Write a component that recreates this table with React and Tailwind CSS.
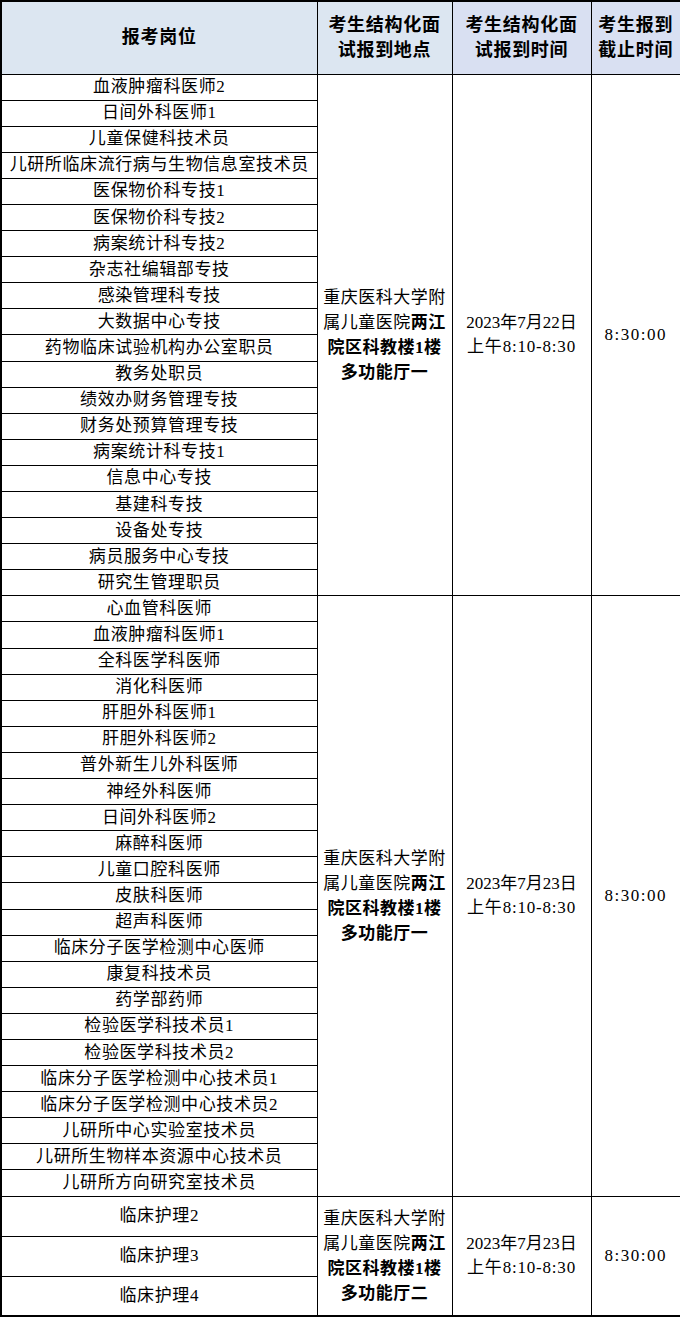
import React from "react";

const groups = [
  {
    rows: [
      "血液肿瘤科医师2",
      "日间外科医师1",
      "儿童保健科技术员",
      "儿研所临床流行病与生物信息室技术员",
      "医保物价科专技1",
      "医保物价科专技2",
      "病案统计科专技2",
      "杂志社编辑部专技",
      "感染管理科专技",
      "大数据中心专技",
      "药物临床试验机构办公室职员",
      "教务处职员",
      "绩效办财务管理专技",
      "财务处预算管理专技",
      "病案统计科专技1",
      "信息中心专技",
      "基建科专技",
      "设备处专技",
      "病员服务中心专技",
      "研究生管理职员",
    ],
    rowH: "h-[26.1px]",
    hall: "多功能厅一",
    date: "2023年7月22日",
  },
  {
    rows: [
      "心血管科医师",
      "血液肿瘤科医师1",
      "全科医学科医师",
      "消化科医师",
      "肝胆外科医师1",
      "肝胆外科医师2",
      "普外新生儿外科医师",
      "神经外科医师",
      "日间外科医师2",
      "麻醉科医师",
      "儿童口腔科医师",
      "皮肤科医师",
      "超声科医师",
      "临床分子医学检测中心医师",
      "康复科技术员",
      "药学部药师",
      "检验医学科技术员1",
      "检验医学科技术员2",
      "临床分子医学检测中心技术员1",
      "临床分子医学检测中心技术员2",
      "儿研所中心实验室技术员",
      "儿研所生物样本资源中心技术员",
      "儿研所方向研究室技术员",
    ],
    rowH: "h-[26.1px]",
    hall: "多功能厅一",
    date: "2023年7月23日",
  },
  {
    rows: ["临床护理2", "临床护理3", "临床护理4"],
    rowH: "h-[40px]",
    hall: "多功能厅二",
    date: "2023年7月23日",
  },
];

const cell = "border border-black text-center align-middle p-0";

function Place({ hall }) {
  return (
    <div className="leading-[25px] tracking-[0.5px]">
      <div>重庆医科大学附</div>
      <div>
        属儿童医院<b>两江</b>
      </div>
      <div className="font-bold">院区科教楼1楼</div>
      <div className="font-bold">{hall}</div>
    </div>
  );
}

export default function App() {
  return (
    <div
      className="w-[680px] bg-white text-black"
      style={{ fontFamily: '"Liberation Serif", "Noto Sans CJK SC", serif' }}
    >
      <table className="w-[680px] border-collapse table-fixed border-2 border-black text-[17px] leading-[20px]">
        <colgroup>
          <col className="w-[316px]" />
          <col className="w-[135px]" />
          <col className="w-[139px]" />
          <col className="w-[90px]" />
        </colgroup>
        <thead>
          <tr className="h-[73px] font-bold text-[18px] leading-[25px] tracking-[0.7px]">
            <th className={`${cell} bg-[#dce6f1]`}>报考岗位</th>
            <th className={`${cell} bg-[#dce6f1]`}>
              考生结构化面
              <br />
              试报到地点
            </th>
            <th className={`${cell} bg-[#d9e0f2]`}>
              考生结构化面
              <br />
              试报到时间
            </th>
            <th className={`${cell} bg-[#d9e0f2]`}>
              考生报到
              <br />
              截止时间
            </th>
          </tr>
        </thead>
        <tbody>
          {groups.map((g, gi) =>
            g.rows.map((name, i) => (
              <tr key={`${gi}-${i}`} className={g.rowH}>
                <td className={`${cell} tracking-[0.6px] whitespace-nowrap`}>{name}</td>
                {i === 0 && (
                  <>
                    <td rowSpan={g.rows.length} className={cell}>
                      <Place hall={g.hall} />
                    </td>
                    <td rowSpan={g.rows.length} className={`${cell} leading-[24px]`}>
                      <div>{g.date}</div>
                      <div className="tracking-[0.8px]">上午8:10-8:30</div>
                    </td>
                    <td rowSpan={g.rows.length} className={`${cell} tracking-[1.5px]`}>
                      8:30:00
                    </td>
                  </>
                )}
              </tr>
            ))
          )}
        </tbody>
      </table>
    </div>
  );
}
